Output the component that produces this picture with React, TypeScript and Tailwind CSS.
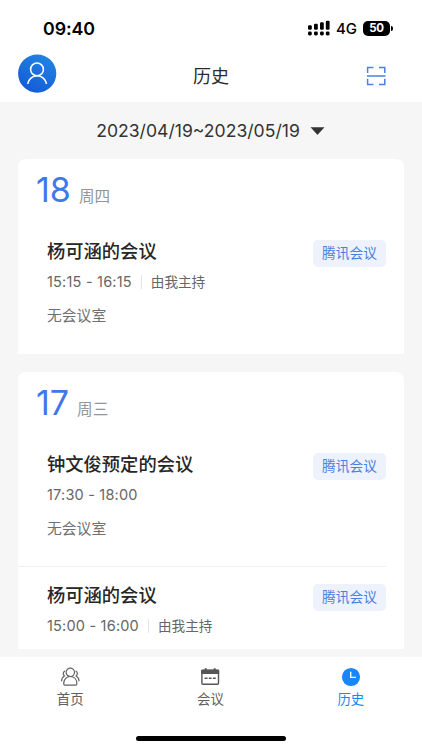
import type { ReactNode } from 'react';

type Meeting = {
    title: string;
    time: string;
    host?: string;
    room?: string;
};

type Day = {
    date: string;
    weekday: string;
    meetings: Meeting[];
};

const DAYS: Day[] = [
    {
        date: '18',
        weekday: '周四',
        meetings: [{ title: '杨可涵的会议', time: '15:15 - 16:15', host: '由我主持', room: '无会议室' }],
    },
    {
        date: '17',
        weekday: '周三',
        meetings: [
            { title: '钟文俊预定的会议', time: '17:30 - 18:00', room: '无会议室' },
            { title: '杨可涵的会议', time: '15:00 - 16:00', host: '由我主持' },
        ],
    },
];

function StatusBar() {
    return (
        <div className="flex h-14 items-center justify-between pl-[43px] pr-[29px] text-black">
            <span className="mt-px text-[17.8px] font-semibold leading-none tracking-[-0.1px]">09:40</span>
            <div className="flex items-center">
                <svg width="22" height="16" viewBox="0 0 22 16" fill="currentColor">
                    <rect x="0" y="5.2" width="3.8" height="4.6" rx="1.2" />
                    <rect x="6" y="3.7" width="3.8" height="6.1" rx="1.2" />
                    <rect x="12" y="2.3" width="3.8" height="7.5" rx="1.2" />
                    <rect x="17.8" y="0.8" width="3.8" height="9" rx="1.2" />
                    <rect x="0" y="11.6" width="3.8" height="3.8" rx="1.4" />
                    <rect x="6" y="11.6" width="3.8" height="3.8" rx="1.4" />
                    <rect x="12" y="11.6" width="3.8" height="3.8" rx="1.4" />
                    <rect x="17.8" y="11.6" width="3.8" height="3.8" rx="1.4" />
                </svg>
                <span className="ml-1.5 w-[21px] text-[15px] font-medium leading-none tracking-[-0.2px]">4G</span>
                <div className="ml-[6px] flex h-[15px] w-[27px] items-center justify-center rounded-[5px] bg-black pt-px text-[11.5px] font-bold leading-none tracking-[-0.3px] text-white">
                    50
                </div>
                <div className="ml-px h-[5px] w-[2px] rounded-r-full bg-black" />
            </div>
        </div>
    );
}

function Header() {
    return (
        <header className="grid h-[46px] grid-cols-3 items-start px-[18px]">
            <svg className="-mt-[2px]" width="39" height="39" viewBox="0 0 39 39" fill="none">
                <defs>
                    <linearGradient id="avatar" x1="0.75" y1="0" x2="0.25" y2="1">
                        <stop offset="0" stopColor="#2185e3" />
                        <stop offset="1" stopColor="#1459d6" />
                    </linearGradient>
                </defs>
                <circle cx="19.2" cy="19.6" r="19.1" fill="url(#avatar)" />
                <circle cx="19" cy="15.4" r="6.4" stroke="#fff" strokeWidth="1.6" />
                <path d="M9.7 29.9a9.5 9.5 0 0 1 18.8 0" stroke="#fff" strokeWidth="1.6" />
            </svg>
            <h1 className="mt-[8px] text-center text-[18px] leading-[26px] text-[#2b2b2b]">历史</h1>
            <svg className="mr-[18px] mt-[10px] justify-self-end" width="20" height="20" viewBox="0 0 20 20" fill="none" stroke="#4a80e4" strokeWidth="1.5">
                <path d="M1.6 7V1.4H7.4M13 1.4h5.8V7M18.8 12.7v5.9H13M7.4 18.6H1.6v-5.9M.9 9.9h18.6" />
            </svg>
        </header>
    );
}

function MeetingItem({ meeting }: { meeting: Meeting }) {
    return (
        <div>
            <div className="flex items-start justify-between">
                <h3 className="h-[26px] text-[18.3px] font-medium leading-[26px] text-[#262626]">{meeting.title}</h3>
                <span className="mt-[2px] h-[27px] w-[73px] rounded-[5px] bg-[#edf2fd] text-center text-[13.7px] leading-[26px] text-[#4a80dc]">
                    腾讯会议
                </span>
            </div>
            <div className="mt-[5px] flex h-[20px] items-center text-[#666]">
                <span className="text-[14.5px] leading-[20px] tracking-[0.2px]">{meeting.time}</span>
                {meeting.host && (
                    <>
                        <span className="ml-[9px] h-[14px] w-px bg-[#e4e4e4]" />
                        <span className="ml-[9px] text-[13.6px] leading-[20px]">{meeting.host}</span>
                    </>
                )}
            </div>
            {meeting.room && <p className="mt-[13px] text-[14.8px] leading-[22px] text-[#707070]">{meeting.room}</p>}
        </div>
    );
}

function DayCard({ day, children }: { day: Day; children: ReactNode }) {
    return (
        <section className="rounded-t-[8px] bg-white pr-[18px]">
            <div className="flex h-[79px] items-baseline pl-[18px] pt-[10px]">
                <span className="text-[34px] leading-[42px] text-[#4078ec]">{day.date}</span>
                <span className="ml-[8px] text-[15.6px] leading-[22px] text-[#969696]">{day.weekday}</span>
            </div>
            {children}
        </section>
    );
}

function PeopleIcon() {
    return (
        <svg width="20" height="20" viewBox="0 0 20 20" fill="none" stroke="#606060" strokeWidth="1.2" strokeLinecap="round">
            <circle cx="10.3" cy="5.3" r="4.2" />
            <path d="M5 18.1c-.9 0-1.3-.4-1.3-1.3 0-4.2 2.5-7.3 6.6-7.3s6.6 3.1 6.6 7.3c0 .9-.4 1.3-1.3 1.3Z" />
            <path d="M4.5 4.2a2.9 2.9 0 0 0-.1 4.7C2.7 9.9 1.7 11.5 1.6 13.8M16.1 4.2a2.9 2.9 0 0 1 .1 4.7c1.7 1 2.7 2.6 2.8 4.9" />
        </svg>
    );
}

function CalendarIcon() {
    return (
        <svg width="20" height="20" viewBox="0 0 20 20" fill="none">
            <rect x="1.9" y="3.3" width="16.6" height="14" rx="1" stroke="#555" strokeWidth="1.4" />
            <path d="M1.2 2.8h18v4.2h-18zM4.7 1.2h2v3h-2zM13.7 1.2h2v3h-2z" fill="#555" />
            <path d="M4.6 11.2h2.9M8.8 11.2h2.8M12.9 11.2h2.9" stroke="#555" strokeWidth="1.4" />
        </svg>
    );
}

function ClockIcon() {
    return (
        <svg width="20" height="20" viewBox="0 0 20 20" fill="none">
            <circle cx="10" cy="10" r="9.1" fill="#1787fb" />
            <path d="M9.7 4.8v5.6h5.3" stroke="#fff" strokeWidth="1.4" />
        </svg>
    );
}

const TABS = [
    { label: '首页', icon: <PeopleIcon />, active: false },
    { label: '会议', icon: <CalendarIcon />, active: false },
    { label: '历史', icon: <ClockIcon />, active: true },
];

function TabBar() {
    return (
        <nav className="flex h-[93px] flex-col items-center bg-white">
            <div className="grid h-[78px] w-full grid-cols-3 pr-px">
                {TABS.map((tab) => (
                    <div key={tab.label} className="flex flex-col items-center pt-[10px]">
                        {tab.icon}
                        <span className={`mt-[2px] text-[13.4px] leading-[20px] ${tab.active ? 'text-[#1787fb]' : 'text-[#606060]'}`}>
                            {tab.label}
                        </span>
                    </div>
                ))}
            </div>
            <div className="mt-[0.5px] h-[5.5px] w-[150px] rounded-full bg-black" />
        </nav>
    );
}

export default function App() {
    const [first, second] = DAYS;

    return (
        <div className="flex h-[750px] w-[422px] flex-col overflow-hidden bg-[#f6f6f6] font-['Inter','Noto_Sans_CJK_SC',sans-serif]">
            <div className="bg-white">
                <StatusBar />
                <Header />
            </div>

            {/* Date range */}
            <div className="flex h-[57px] items-center justify-center pr-px text-[#333]">
                <span className="text-[17.6px] leading-none">2023/04/19~2023/05/19</span>
                <svg className="ml-[10px]" width="15" height="8" viewBox="0 0 15 8" fill="currentColor">
                    <path d="M.5.2h14L8.3 7.1a1 1 0 0 1-1.6 0Z" />
                </svg>
            </div>

            <main className="flex h-[498px] flex-col gap-[18px] px-[18px]">
                <DayCard day={first}>
                    <div className="h-[115.5px] pl-[29px]">
                        <MeetingItem meeting={first.meetings[0]} />
                    </div>
                </DayCard>
                <DayCard day={second}>
                    <div className="h-[115px] pl-[29px]">
                        <MeetingItem meeting={second.meetings[0]} />
                    </div>
                    <div className="h-[83.5px] border-t border-[#f0f0f0] pl-[29px] pt-[15.5px]">
                        <MeetingItem meeting={second.meetings[1]} />
                    </div>
                </DayCard>
            </main>

            <TabBar />
        </div>
    );
}
